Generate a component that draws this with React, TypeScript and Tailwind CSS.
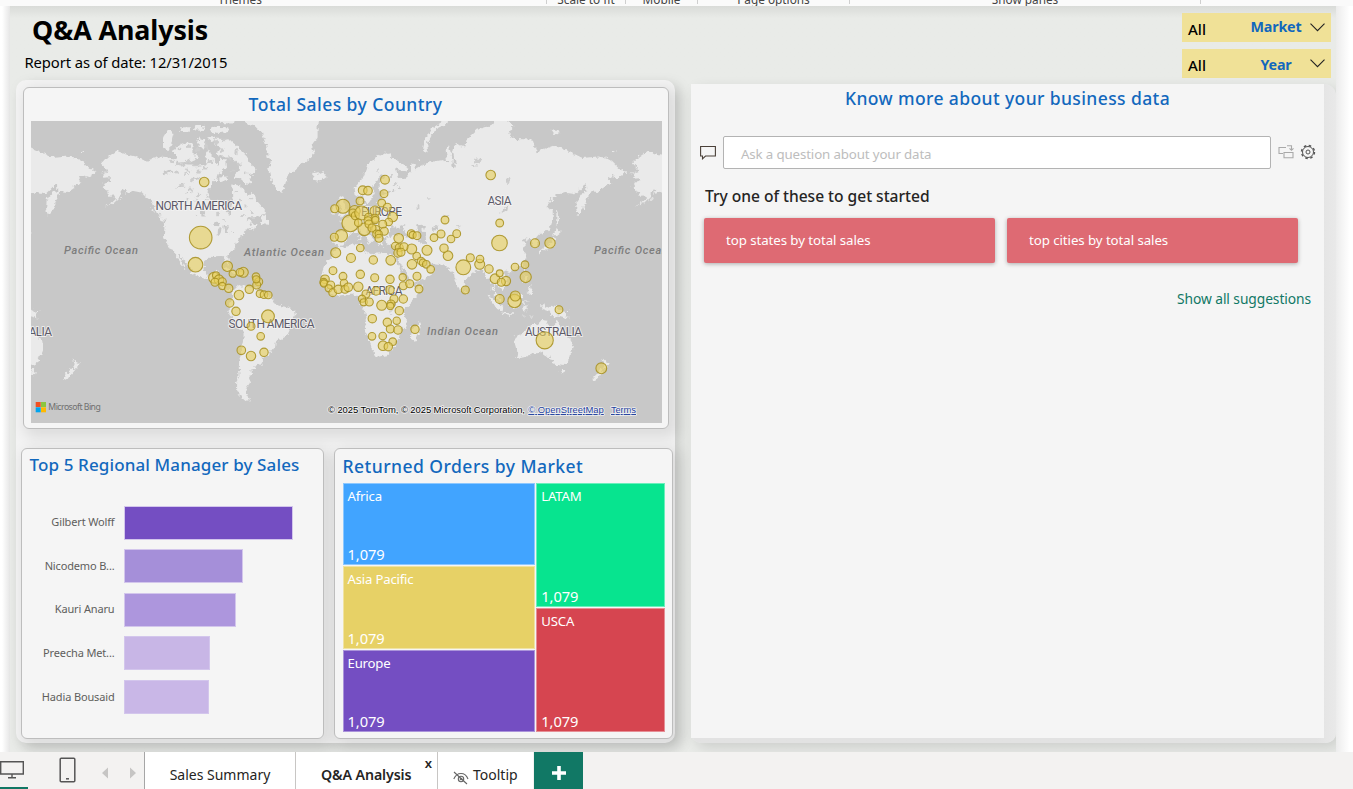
import React from "react";

/* ---------- map data ---------- */

const LAND: string[] = [
  // North and Central America
  "-168,65.6 -164,66.4 -166,64.5 -161,64.6 -161,63.5 -164.5,63 -166,61.6 -164,60.3 -162,60 -162,58.7 -158,58.8 -157,57.5 -160,56 -164.5,54.7 -162,55 -158,56.2 -154,58.3 -153.5,59.5 -151.5,61 -150,61 -151.5,59.3 -148,60 -145,60.3 -140,59.8 -137,58.4 -134,57.5 -131,55 -130,53.5 -128,51.5 -127,50.5 -124,49.3 -122.8,49 -122.5,47.5 -124.6,48.3 -124,46 -124.3,43 -124.2,40.5 -122.5,37.8 -121.8,36.5 -120.6,34.6 -118.4,34 -117.2,32.7 -116,30.5 -114.8,28 -114,27 -112.2,25 -110,23 -109.5,23.3 -111,25.5 -112.5,28 -114.7,31 -113,31 -111,28 -109,26 -107,24 -105.5,21.5 -105.5,20 -104,19 -101,17.5 -97,16 -94.5,16.2 -92,14.5 -88,13 -87.5,12.5 -85.8,11 -85.5,10 -83.5,8.5 -82,8.2 -80,7.4 -79.5,9 -78,8.2 -77.2,8.6 -79.5,9.6 -82,9 -83.5,10.8 -83.3,14 -83.2,15 -86,15.8 -88.5,15.8 -88.2,18 -87,21.4 -90,21.3 -90.5,20 -92,18.6 -94.5,18.2 -96,19.3 -97.5,22 -97.3,25 -97,28 -94.5,29.4 -91,29.3 -89,29.2 -89,30.3 -86,30.4 -84,30 -82.8,28.8 -82.5,27 -81.2,25.2 -80.2,25.5 -80.2,27.5 -81.4,30.5 -79,33 -76,35 -76,37 -74,39.5 -73.5,40.8 -70.3,41.6 -70.8,43 -69,44 -67,44.8 -64.5,45.5 -66,43.7 -63,44.8 -60.5,46.2 -64,46.2 -65,48 -66.5,49 -69,48.3 -66.5,50.2 -60,50.2 -56,51.8 -55.8,53.5 -58,54.8 -61.5,57 -63,59 -65,60 -68,58.5 -70,61 -74,62.2 -78,62.4 -77.5,60 -77,57.5 -76.6,56 -79.5,54.5 -79,52 -80,51.2 -82,53 -82.3,55.2 -86,55.8 -89,57 -92.5,57 -94.7,59 -94.5,61 -91,63 -88,64.2 -87,65.5 -85,66.5 -81.5,67.5 -82,69.3 -85.5,69.5 -88,68 -91,69.5 -94,71.8 -96,70 -96,68 -101,67.8 -108,67.8 -115,68 -115,69.3 -121,69.8 -127,70 -133,69.4 -137,69 -144,70 -150,70.5 -156.5,71.3 -162,70 -166.5,68.3 -163,67 -162,66.3",
  // Arctic islands
  "-117,69 -113,68.6 -106,68.8 -101,69.6 -105,71 -105,73 -109,73 -113,72.6 -119,71.5 -116,70.3",
  "-125,72 -122,71.2 -119,73 -117,75 -122,75.3 -125,74",
  "-90,73.8 -85,73.7 -80,73.6 -76,72.7 -71,71 -68,70 -66,68.5 -62,66.8 -63.5,65 -67,66 -66,64 -65,62.5 -69,62.8 -73,64.4 -78,64.5 -74,66 -73,68 -79,70 -85,70 -89,70.7 -86,72 -90,72.5",
  "-87,64 -84,63.2 -80.5,63.8 -84,65.5",
  "-102,73 -97,71.5 -96,73.5 -100,74",
  "-95,73.8 -91,73 -90,74.2",
  "-93,75 -86,74.8 -80,75 -81,75.8 -92,75.9",
  "-114,75 -107,75 -106,75.8 -113,75.8",
  "-104,75.3 -98,75.2 -97,76.2 -103,76.2",
  "-86,76.5 -78,76.4 -77,78 -88,78",
  // Newfoundland, Vancouver Island, Haida Gwaii, Kodiak
  "-59,47.7 -55.5,46.9 -53,46.8 -53,48.5 -55.7,49.8 -55.7,51.5 -57.5,50.5",
  "-128.3,50.7 -125,50 -123.4,48.5 -125.8,49",
  "-133,54 -131.7,54 -131.2,52.3",
  "-154.5,57.3 -152.3,58.1 -152.8,57.2",
  // Caribbean
  "-84.8,22 -82,23 -78,22.5 -74.3,20.2 -77.5,19.9 -79,21.3",
  "-74.3,19.8 -71,19.9 -68.5,18.6 -71.5,17.8 -74.3,18.4",
  "-78.2,18.4 -76.3,18.2 -77.5,17.9",
  "-67.2,18.4 -65.7,18.3 -66.5,18",
  // South America
  "-77.3,8.5 -76,9.4 -74.8,11 -72,12.2 -71.5,10.8 -70,12 -68,10.8 -64,10.3 -62,10.6 -60,8.6 -57,6.2 -54,5.9 -51.5,4.4 -50,1.8 -50,0 -48,-0.8 -44.5,-2.2 -41,-2.9 -38,-4 -35.3,-5.4 -34.8,-8 -37,-11 -39,-13.5 -39,-17.5 -41,-21.8 -43,-23 -46,-24 -48.5,-26 -48.8,-28.5 -51,-31 -53.5,-34 -56.5,-34.9 -58.3,-34 -57,-36.5 -58.5,-38.5 -62,-39 -62.5,-41 -65,-41 -64.5,-43 -67,-45.5 -65.9,-47.5 -69,-50.5 -68.5,-52.3 -66,-54.8 -69,-55.3 -73,-53 -75.3,-50.5 -75.3,-47 -73,-44 -73.5,-40 -73.3,-37 -71.5,-33 -71.4,-28 -70.3,-23 -70.3,-18.3 -74,-16 -76.5,-13.5 -79,-8 -81.3,-5.8 -80.2,-3.3 -80.8,-1 -78.8,1.6 -77.3,4 -77.7,7",
  // Greenland
  "-73,78.5 -68,76.2 -62,76 -58,75 -55,72.5 -54,70 -51,69 -53.5,67 -52,64.5 -49.5,62 -47,60.7 -44,60 -42,62.5 -40.5,65 -36,66.5 -31,68.2 -25,69.8 -22,70.5 -24,72.5 -20,74 -20,76.5 -18,78.5",
  // Iceland
  "-24,65.6 -22,66.4 -20,65.7 -16,66.4 -13.7,65 -18.5,63.4 -22.5,63.9 -22,64.7",
  // British Isles
  "-5.5,50.1 -3,50.7 1.2,51.2 1.6,52.7 0,53.5 -1.6,55.5 -2,57.6 -3.5,58.6 -5.8,57.5 -4.8,55 -3,53.6 -4.6,53 -5,51.8",
  "-10,51.7 -6.3,52.2 -5.7,54.5 -8,55.3 -10,54",
  // Africa
  "-6,35.8 -2,35.2 3,36.9 10,37.3 11,35 10.2,34 15,32.4 19,30.4 20.5,32.5 23,32.6 29,31 32.3,31.2 34,29.5 32.6,29.9 34,26.5 35.7,23.8 37.2,20 38.5,18 40,15.2 43.2,12 44.5,10.5 51,11.9 50,8 47,4 43,0 40.5,-2.7 39,-6 40.6,-11 40.5,-15 36,-18.8 35.3,-23.5 32.8,-26 31,-29.8 27.5,-33.3 22,-34.2 18.6,-34.3 18.2,-31.7 15.3,-27 14.4,-22.5 11.8,-17.8 13.6,-12.5 13,-8.8 12,-5 9,-1 9.7,4 6,4.3 4,6.4 0,5.7 -4,5.2 -7.7,4.4 -11,6.8 -13.3,9 -15,11 -17.3,14.7 -16.3,18 -17,21 -15.5,24.5 -13,27.8 -10,29.6 -9.6,32",
  "44.5,-16.2 47.5,-15 49.5,-12.2 50.4,-15.7 48.5,-21 47,-25 44.5,-25.4 43.4,-22.5",
  // Eurasia
  "-9.3,43 -9.3,38.8 -8.9,37 -6.2,36.5 -5.3,36.1 -2,36.8 0,38.7 0,40 3.2,42 3.5,43.3 7,43.3 9,44.4 11,42.3 15.5,38 16.8,38.9 18.4,40 15.5,41.8 12.4,44.4 13.6,45.6 16,43.5 19.5,41.8 19.5,40 21.3,37 23,36.5 24,38 22.8,40.4 26,40.7 29,41.1 28,43.5 30.5,46 33,46.1 33.6,44.5 36.5,45.3 35,46.3 39,47.2 37.5,45 41.5,42 41,41 35,42 31,41.2 27,40.4 26.3,38.5 28,36.8 32,36.1 36,36.8 35.8,34 34.3,31.3 34.8,29.5 35,28 39,21.5 42.5,16.5 43.4,12.7 45,12.8 52,15.7 57.7,19 59.8,22.5 56.5,24.5 56.3,26.2 54,24.1 51.5,24.3 51.5,26 50,26.5 48,29.9 50.5,29.8 52.5,27.5 56.5,27 57.3,25.7 61.5,25.1 66.5,25.2 68.5,23.3 70,20.8 72.7,21 73,17 75,12 77.3,8.2 80,13 80.3,15.7 85,19.5 88,21.7 91.5,22.5 94.3,18 94.5,16 97.5,16.5 98.5,12 98.3,8.5 101,5 103.4,1.5 104.2,1.5 103.3,5 100.5,7.3 99.3,9.5 100,13.4 102.5,12 105,8.7 109.2,12 108.7,15.5 106,19 108,21.5 110.5,20.5 114,22.3 118.5,24.7 121.8,29 121,32 119.3,35 122.4,37 118,38.5 121.7,40.8 121.3,38.9 124.5,40 126.5,37.2 126.5,34.4 129.3,35.4 129.4,37.2 127.5,39.7 130.6,42.3 135,43.3 138.5,46.5 140.5,50 140.4,53 137.3,53.8 135.5,54.8 142,59 149,59.6 155,59.2 160,61.6 163,62.5 163.2,60.2 159.8,59.8 156,57 155.6,54 156.7,51 160,53.2 162.2,56.2 163.3,58.2 166,60.2 170,60 177,62.3 179.5,62.6 177.3,64.6 180,65 184,64.5 190,66.1 185,67.2 180,69 176,69.8 170,70 160,69.7 152,71 142,72.5 133,71.5 129,71 126,73.6 114,73.7 110,74.5 113,76 104,77.6 98,76.2 88,75.4 81,73.6 80.5,72 77,72.3 74,73 72,71 74,68 73,66.5 71.5,67.5 71.8,69.5 69,72.8 67,71.5 68,68.6 64,69.2 60,68.9 54,68.4 46,66.8 46,68.2 43.5,68.3 43.5,66.2 40,64.6 36.5,64 34.5,64.8 32.5,67.1 40,66.2 41,67.2 33,69.4 27,71 20,70 14.5,68 10.5,64.2 5.2,61.5 5.8,58.7 8,58.2 10.6,59.4 12.6,56 14.2,55.5 16.5,57.2 18.8,60 17.2,61.5 21.2,64.5 24,65.8 25.2,65 21.5,62.5 21.5,60.8 25,60.1 29.5,60 28,59.4 23.5,59 24.3,57.3 21.5,57.3 21,55.2 18.5,54.7 14,54 11,54 10.5,57.5 8.2,56.8 8.7,53.9 5,53.3 2.5,51.1 -1.5,49.5 -4.6,48.5 -1.5,46.6 -1.5,43.4",
  "11,53.9 12.5,55.9 10.8,55.5",
  "51.5,71.5 53,70.8 55,71.2 54.5,73 57,74.3 61,75.6 68.5,76.5 66,76.9 57,75.5 53,73.5",
  "142,54.2 143.2,52 143.3,49.5 144.5,48.8 142.8,46.2 142,48 142.2,51",
  "140,41.5 141,43.5 142,45.4 145.2,43.4 143,42",
  "141,41.4 142,39.5 140.8,36 139.5,35 136,33.6 132.5,34 130.8,31.2 129.8,33 131,34.3 135,35.5 137,37 139.5,38.5",
  "120.2,23 121.5,25.2 121,22.2",
  "108.7,19.3 110.8,20 109.6,18.3",
  "8.3,39 9.7,39.2 9.5,43 8.5,42",
  "12.5,38 15.5,38.2 15,36.8",
  "23.6,35.4 26.2,35.2 24.5,34.9",
  "32.4,34.9 34.4,35.6 33.5,34.6",
  "79.8,8.5 81.7,7.5 80.5,6",
  "50,69.3 48.3,69.3 49,68.7",
  "139,75.4 145,75 141,74.6",
  "180,71.4 182,71.2 180,70.9",
  // Maritime south-east Asia
  "95.4,5.6 98,4 103.5,-1 106,-3 105.7,-5.8 102,-4 99,0",
  "105.3,-6.4 108.5,-6.8 112.5,-6.9 114.4,-8 110,-8 106.4,-7.4",
  "109,1.5 111.5,2.5 115.5,5.5 117,7 119,5.2 117.5,1 116,-3.5 112,-3.4 110,-1.5",
  "119,-3.2 120,0.8 125,1.5 120.5,0.4 121,-1 123.5,-1 121.5,-2 123,-5 121,-4 120.3,-5.6 119.4,-5.4",
  "120,16 120.6,18.5 122.2,18.4 121.6,15.5 124,13 121,13.7",
  "122,7 125.5,9.8 126.5,7.5 125.4,5.7 124,7.2",
  "123,9.2 125.4,12.4 125,10.2",
  "131,-0.8 134,-0.8 135,-3.3 138,-1.7 141,-2.6 145,-4.2 147.8,-6.5 150.7,-10.5 147,-9.5 143.5,-8.5 141,-9.1 138,-8.3 138,-5.7 133,-4 132,-2.8",
  "148.5,-5.7 152,-4.3 150,-6.3",
  "118,-8.4 122.7,-8.4 119,-8.8",
  "124,-9.4 127,-8.5 124,-10.2",
  // Oceania
  "113.7,-22.5 114,-26.5 115.7,-31.8 115,-34.3 118,-35 123.5,-33.9 129,-31.6 134,-32.7 136,-34.8 137.8,-32.7 137,-35.5 139.5,-36 141,-38.2 145,-38.5 147,-38.8 150,-37.4 151.5,-33 153.4,-29 153,-25 149.5,-22 146,-19 145.3,-15 143.7,-14.3 142.5,-10.8 141.5,-13.5 141,-17 139.3,-17.5 135.7,-15 136.8,-12.2 132.5,-11.4 130,-13.5 129,-15 126.5,-14 123.5,-17 122,-18.2 118.5,-20.4",
  "144.7,-40.8 148.2,-40.9 147.5,-43.5 145.8,-43.2",
  "172.8,-34.5 175.5,-36.6 178.4,-37.8 176.8,-40 175,-41.5 173.8,-39.3 174.7,-37.5",
  "172.7,-40.6 174.2,-41.7 171.2,-44.3 169,-46.6 166.6,-45.8 170,-43",
];

const WATER: string[] = [
  "47,46.5 51,47 53,45.3 51,44.5 53.5,41 53.7,37.2 50,37.3 49,39.5 47.6,43",
  "58.3,45.5 61,46.5 61,44.3 58.5,43.8",
  "-92,46.7 -88.5,48.7 -84.8,46.6 -88,46.7",
  "-87.8,42 -86.3,42 -85,45.8 -87.5,45.4",
  "-84,46 -80,45.4 -81.7,43.3 -83.4,43.6",
  "-83,41.7 -79,42.9 -81,42.4",
  "-79.5,43.4 -76.3,44 -76.5,43.4",
  "-98.8,50.5 -96.6,50.5 -97.7,53.8 -99.3,53",
  "-117,61 -109.5,62.8 -114,62.4",
  "-124,65.2 -118,66.2 -120,67 -124.5,66.3",
  "-111,59 -106,59.5 -110,59.7",
  "-103,56.6 -101.5,58.2 -102.2,56.4",
  "-104,64 -99,64.4 -102,64.9",
  "-107,66 -108.5,67.4 -109.5,66.6",
  "31,60 33,60.6 31.4,61.6",
  "34.5,61.2 36,61.4 35,62.6",
  "103.8,51.6 109.8,55.6 108.8,53.3",
  "32,-2.4 34,-1 33.5,0.3 31.8,-0.2",
  "74,46 79,46.5 74.5,45.2",
  "29.2,-4 30.2,-8 30.8,-8.5 29.8,-4",
  "34,-10 35,-14 34.4,-13",
  "77,42.2 78.2,42.6 76.5,42.6",
];

// Small lakes and inlets of the Canadian Shield: x, y, rx, ry
const LAKES: number[][] = [
  [172,161,3,1.2],[180,165,4,1.4],[188,161,2.5,1.6],[196,166,3.5,1.3],[176,172,2,1.4],[186,174,3,1],[192,180,2,1.5],[199,172,2,1.8],[205,168,3,1.5],[210,162,3,2],
  [183,186,2.5,1],[191,190,2,1.4],[198,195,2.2,1.2],[187,200,1.5,1.4],[206,200,2,1],[212,207,1.8,1.3],[218,214,2,1.2],[224,220,2,1],[203,210,1.4,1.6],[197,215,1.2,1],
  [236,192,1.5,1],[240,200,2,1.2],[246,206,1.6,1.4],[234,208,1.8,1],[243,215,2,1],[230,200,1.2,1.2],[250,199,1.4,1],[252,212,2,1],[228,227,2,0.9],
  [197,150,2.5,2.5],[206,146,2,3],[215,142,3,2],[222,150,2.5,2],[230,158,2.5,1.5],[236,152,1.6,3],[224,140,3,1.2],[240,165,2,1.6],[233,171,2.5,1.2],[246,174,1.6,1.6],[188,146,2,2],[179,149,2.5,1.2],
  [300,228,0,0],[478,161,4,2.5],[474,166,3,1],[508,181,1.5,3],[418,207,1.5,2],[428,198,2,0.8],[446,216,2.5,1],[391,176,1.6,1],[395,184,1.4,0.9],[378,170,0.8,2],
];

const BUBBLES: number[][] = [
  [204.2,182,4.8],[200.7,237.6,11.3],[195.5,264.7,7.3],[227.3,266.3,5.2],[232.7,273.7,3.6],[243.3,272.3,5],[240,272.3,3.8],[214,277.7,5.4],[216,275.3,3.5],[219,279.7,4.8],[215,282.3,4],[222.3,281.7,4],[222.3,286,3.6],[228.7,288.3,4.2],[239,295,4.8],[249.3,289.3,4.2],[256,276.7,3.8],[258.7,281.7,4],[256.7,285,4],[256.3,279.3,3.6],[260,293.7,3.8],[264,294.7,3.8],[268.3,295,3.8],[229.7,303,4.2],[236,311.3,4.2],[268,316.3,6.4],[251,326.3,4],[260.7,336.3,3.8],[241.3,350.3,4.3],[251,356,4.7],[264,352.3,4.2],
  [335.7,252.7,5],[333,270.7,3.9],[343,276.3,3.9],[325,279.3,4.3],[323.7,282.3,3.9],[324,283.5,3.6],[330.7,285,4],[328.7,288.3,3.6],[332.7,292.7,3.9],[338.3,289.3,4.2],[344,283,3.7],[345,289.3,4],[348.3,287.3,4.3],[351,258,4.5],[360.3,274.3,4.2],[373.3,260,4.2],[390.7,260.3,4.8],[374.7,277.7,4],[390,279.3,4.2],[402.7,277.3,3.7],[358.3,286.7,4.7],[366,294,4],[362,298.7,3.6],[363.7,302.3,3.6],[369.3,302,4],[376,291,4.2],[390,289.7,4.2],[403.3,285.7,4],[409.7,283.7,4],[417,276.3,4],[419,289,3.9],[394,299,4],[391,304,4],[390.3,306,3.6],[381.7,305.3,5],[403.3,299,4.2],[399.3,310.7,4.2],[372.3,318.7,4.2],[387.3,322.3,4.2],[396.7,320.7,3.7],[390.3,329,4],[398,330,4.2],[415,329.3,4.2],[372,336.3,3.8],[382.7,336,3.8],[392.7,341.7,3.8],[383,345.7,4.8],[388.3,346.7,4.2],
  [412,264.3,4.8],[416.7,256,3.8],[421,261,3.8],[423,262.7,3.7],[426.3,264.3,3.8],[430.7,269.3,3.8],[427,250.3,5],[411.7,249,5],[448,255.7,4.8],[444,248.2,4.2],[463.3,267.3,7.4],[470.3,257.7,4],[479.7,264.3,5],[480,259,3.8],[489,269,4.2],[465.3,290,4],[495,278.7,4.8],[499.7,273.3,3.4],[506,281,4.6],[501.3,282.3,4],[515,267,3.8],[525,264.7,3.8],[525.7,277,5.6],[499.7,299,4.5],[514.5,301,6.7],[515.3,296,5],[559,309.7,3.9],[544.7,340.3,8.6],[601.3,368.3,5.4],
  [490.7,175,4.8],[499.7,223,3.9],[499.5,243,7.8],[535,243.3,4.5],[550,243,5.2],[445,220,3.9],[441,234,4],[434,237.7,3.8],[451,239,3.8],[456.7,233.7,3.9],[411.3,233.7,4],[412.7,235,3.6],[417,235.7,3.9],[398.7,238.3,4.8],[395.3,246,3.8],[399.3,247.7,4],[404,246.7,4],[398,253,4.2],[401,252.3,4],[360.3,248,3.8],[385,179.7,4.4],[362.7,190.3,4.4],[368,190.7,4.3],[384,193.7,3.9],[360,201,3.9],[381.7,203,3.9],[387.3,207.3,4],[392.7,217,4.8],[343,206.3,7],[334.7,208.7,4],[350.3,223.3,8.4],[364.3,229.3,6.3],[341.3,235.7,6.2],[334.3,237.3,4],[354.7,211,5.5],[353,213,4],[355.3,215.7,4],[361.7,213,7],[375,211,5],[368.7,217.3,4],[375,218.3,4],[368,220.7,4],[369,224,4],[358.3,222.7,3.8],[388.7,222,3.8],[382.7,224.3,4],[375.7,229.3,4],[372,228,4],[384.3,231.3,4],[376.7,234,4],[378.7,234,3.6],[379,238.3,4],[375.3,220,3.6],
];

const DEG = 530 / 360;

const project = (points: string, dx: number) =>
  points
    .split(" ")
    .map((p) => {
      const [lon, lat] = p.split(",").map(Number);
      const m = Math.log(Math.tan(Math.PI / 4 + (lat * Math.PI) / 360));
      return `${(347 + dx + lon * DEG).toFixed(1)},${(303 - (360 / (2 * Math.PI)) * DEG * m).toFixed(1)}`;
    })
    .join(" ");

function SalesMap() {
  return (
    <svg viewBox="31 121 631 302" width="631" height="302" className="block bg-[#c8c8c8]">
      <defs>
        <filter id="coast" x="-5%" y="-5%" width="110%" height="110%">
          <feTurbulence type="fractalNoise" baseFrequency="0.25" numOctaves="3" seed="4" result="n" />
          <feDisplacementMap in="SourceGraphic" in2="n" scale="6" xChannelSelector="R" yChannelSelector="G" />
        </filter>
      </defs>
      <g filter="url(#coast)">
        {[-530, 0, 530].map((dx) => (
          <g key={dx}>
            {LAND.map((l, i) => (
              <polygon key={i} points={project(l, dx)} fill="#eaeaea" />
            ))}
            {WATER.map((l, i) => (
              <polygon key={i} points={project(l, dx)} fill="#c9c9c9" />
            ))}
          </g>
        ))}
        {LAKES.map(([x, y, rx, ry], i) => (
          <ellipse key={i} cx={x} cy={y} rx={rx} ry={ry} fill="#cdcdcd" />
        ))}
      </g>
      <g fontFamily="Roboto, sans-serif" fontSize="12" fill="#5d5a68" stroke="#f4f4f4" strokeWidth="2" strokeOpacity="0.8" strokeLinejoin="round" paintOrder="stroke">
        <text x="155.5" y="209.5" textLength="86.5">NORTH AMERICA</text>
        <text x="228.5" y="327.5" textLength="86">SOUTH AMERICA</text>
        <text x="361" y="215.5" textLength="41">EUROPE</text>
        <text x="487.5" y="205.2" textLength="24">ASIA</text>
        <text x="365.5" y="294.5" textLength="37">AFRICA</text>
        <text x="525" y="336" textLength="57">AUSTRALIA</text>
        <text x="-5" y="336" textLength="57">AUSTRALIA</text>
      </g>
      <g fontFamily="Roboto, sans-serif" fontSize="11" fontStyle="italic" fontWeight="500" fill="#7d7d7d">
        <text x="64" y="254" textLength="74">Pacific Ocean</text>
        <text x="594" y="254" textLength="74">Pacific Ocean</text>
        <text x="244" y="256" textLength="80">Atlantic Ocean</text>
        <text x="427" y="335" textLength="71">Indian Ocean</text>
      </g>
      <g fill="#e6cf5c" fillOpacity="0.62" stroke="#a68e1d" strokeOpacity="0.85" strokeWidth="1.1">
        {BUBBLES.map(([x, y, r], i) => (
          <circle key={i} cx={x} cy={y} r={r} />
        ))}
      </g>
      <rect x="35.7" y="402" width="5" height="5" fill="#f25022" />
      <rect x="41" y="402" width="5" height="5" fill="#8cc63f" />
      <rect x="35.7" y="407.3" width="5" height="5" fill="#00a4ef" />
      <rect x="41" y="407.3" width="5" height="5" fill="#ffb900" />
      <text x="48.3" y="410.3" fontFamily="Noto Sans, sans-serif" fontSize="8.7" fill="#6f6f6f" textLength="52.5">Microsoft Bing</text>
      <g fontFamily="Liberation Sans, sans-serif" fontSize="9.5" stroke="#f0f0f0" strokeWidth="1.6" strokeLinejoin="round" paintOrder="stroke">
        <text x="328" y="413" fill="#000" textLength="197">© 2025 TomTom, © 2025 Microsoft Corporation,</text>
        <text x="528.3" y="413" fill="#1e3f9e" textLength="75.5" textDecoration="underline">© OpenStreetMap</text>
        <text x="611" y="413" fill="#1e3f9e" textLength="25" textDecoration="underline">Terms</text>
      </g>
    </svg>
  );
}

/* ---------- cards ---------- */

const CARD = "rounded-[6px] border border-[#bdbdbd] bg-[#f5f5f5] shadow-[5px_5px_14px_4px_rgba(0,0,0,0.09)]";
const HEADING = "whitespace-nowrap font-medium text-[#1268bd]";

const MANAGERS = [
  { name: "Gilbert Wolff", width: 169, fill: "bg-[#744ec2]" },
  { name: "Nicodemo B...", width: 119, fill: "bg-[#a58fd9]" },
  { name: "Kauri Anaru", width: 112, fill: "bg-[#ad96dd]" },
  { name: "Preecha Met...", width: 86, fill: "bg-[#c8b6e6]" },
  { name: "Hadia Bousaid", width: 85, fill: "bg-[#c9b7e7]" },
];

function Tile({ name, className }: { name: string; className: string }) {
  return (
    <div className={`flex min-h-0 flex-1 flex-col justify-between border border-white/40 pl-1 text-white ${className}`}>
      <span className="mt-[3px] text-[13.2px] leading-[18px] tracking-[-0.2px]">{name}</span>
      <span className="mb-px text-[14.7px] leading-[18px] tracking-[-0.1px]">1,079</span>
    </div>
  );
}

function Slicer({ label, value, className }: { label: string; value: string; className: string }) {
  return (
    <div className="flex h-[29px] w-[149px] items-center bg-[#f0e197] pl-1.5 pr-1.5">
      <span className="mt-1 w-[34px] text-[15px] font-medium text-black">{value}</span>
      <span className={`flex-1 text-center text-[14.3px] font-bold tracking-[-0.2px] text-[#1268bd] ${className}`}>{label}</span>
      <svg width="15" height="9" viewBox="0 0 15 9" fill="none" stroke="#222" strokeWidth="1.1">
        <path d="M0.5 0.7 7.5 7.7 14.5 0.7" />
      </svg>
    </div>
  );
}

function Suggestion({ text }: { text: string }) {
  return (
    <div className="flex h-[45px] w-[291px] items-center rounded-[2px] bg-[#de6a73] pt-px pl-[22px] text-[13.3px] tracking-[-0.08px] text-white shadow-[0_1px_4px_rgba(0,0,0,0.3)]">
      {text}
    </div>
  );
}

function QnaPanel() {
  return (
    <section className="mt-1 ml-[15px] h-[659px] w-[645px] rounded-tr-[12px] rounded-br-[10px] rounded-bl-[10px] bg-gradient-to-r from-[#e2e2e2] from-97% to-[#e9e9e9] pr-3 pb-[5px] shadow-[5px_5px_14px_rgba(0,0,0,0.12)]">
      <div className="flex h-full flex-col bg-[#f5f5f5]">
        <h2 className={`${HEADING} mt-[2px] text-center text-[17.5px] leading-[25px] tracking-[0.39px]`}>Know more about your business data</h2>
        <div className="mt-[25px] flex items-center pl-[9px]">
          <svg width="16" height="15" viewBox="0 0 16 15" fill="none" stroke="#4a4038" strokeWidth="1.1">
            <path d="M0.6 1.5H15.4V11H5.5L2.5 13.8V11H0.6Z" />
          </svg>
          <div className="ml-[7px] flex h-[33px] w-[548px] items-center rounded-[2px] border border-[#b3b3b3] bg-white pt-[4px] pl-[17px] text-[13.3px] tracking-[-0.14px] text-[#bdbdbd]">
            Ask a question about your data
          </div>
          <svg className="mb-0.5 ml-[7px]" width="16" height="14" viewBox="0 0 16 14" fill="none" stroke="#a9a9a9" strokeWidth="1.1">
            <path d="M5 8.5H1V2.5H8M6 7.500H15V12.800H6ZM9 0.800H13.500V5M11.500 3.300 13.500 5.300 15.500 3.300" />
          </svg>
          <svg className="mb-0.5 ml-[6px]" width="16" height="16" viewBox="0 0 16 16" fill="none" stroke="#555" strokeWidth="1">
            <circle cx="8" cy="8" r="5.500" />
            <circle cx="8" cy="8" r="2" />
            <circle cx="8" cy="8" r="6.500" strokeWidth="1.400" strokeDasharray="2.550 2.550" />
          </svg>
        </div>
        <p className="mt-[15px] ml-3.5 text-[15.6px] leading-6 font-medium tracking-[-0.03px] text-[#252423]">Try one of these to get started</p>
        <div className="mt-[10px] ml-[13px] flex gap-3">
          <Suggestion text="top states by total sales" />
          <Suggestion text="top cities by total sales" />
        </div>
        <p className="mt-[26px] mr-[13px] text-right text-[13.8px] leading-5 tracking-[-0.08px] text-[#117865]">Show all suggestions</p>
      </div>
    </section>
  );
}

/* ---------- page ---------- */

const RIBBON = [
  { text: "Themes", className: "w-[547px] border-r pr-[66px]" },
  { text: "Scale to fit", className: "w-[79px] border-r" },
  { text: "Mobile", className: "w-[72px] border-r" },
  { text: "Page options", className: "w-[152px] border-r" },
  { text: "Show panes", className: "w-[351px] border-r" },
];

export default function App() {
  return (
    <div className="flex h-[789px] w-[1353px] flex-col overflow-hidden bg-white font-['Noto_Sans',sans-serif]">
      <div className="z-10 flex h-[6px] shrink-0 items-end overflow-hidden bg-[#fafafa] text-center text-[11.8px] leading-[14px] text-[#444]">
        {RIBBON.map((r) => (
          <div key={r.text} className={`flex h-1 shrink-0 -translate-y-0.5 items-end justify-center border-[#cfcfcf] whitespace-nowrap ${r.className}`}>
            <span className="translate-y-[2px]">{r.text}</span>
          </div>
        ))}
      </div>

      <div className="flex h-[746px] shrink-0 overflow-hidden">
        <div className="w-2.5 shrink-0 bg-gradient-to-r from-white from-20% to-[#e6e6e6]" />
        <main className="w-[1326px] shrink-0 bg-gradient-to-b from-[#d9dbd8] to-[#e9ebe8] to-[12px]">
          <header className="flex h-[74px] justify-between pr-[5px]">
            <div>
              <h1 className="mt-[6px] ml-[22px] text-[26.8px] leading-9 font-bold tracking-[-0.07px] text-black">Q&amp;A Analysis</h1>
              <p className="mt-1 ml-[14.5px] text-[14.8px] leading-5 tracking-[-0.1px] text-black">Report as of date: 12/31/2015</p>
            </div>
            <div className="flex flex-col gap-[7px] pt-[7px]">
              <Slicer value="All" label="Market" className="pb-0.5 pl-5" />
              <Slicer value="All" label="Year" className="pt-0.5 pl-5" />
            </div>
          </header>

          <div className="flex">
            <section className="ml-1.5 h-[663px] w-[659px] rounded-[10px] bg-[#f3f3f3] pt-[7px] shadow-[5px_5px_14px_rgba(0,0,0,0.13)]">
              <div className={`${CARD} ml-[6.500px] h-[342px] w-[646px] px-[7.500px]`}>
                <h2 className={`${HEADING} mt-1 mb-[4px] text-center text-[17.5px] leading-[25px] tracking-[0.440px]`}>Total Sales by Country</h2>
                <SalesMap />
              </div>
              <div className="mt-[19px] ml-[5px] flex gap-2.5">
                <div className={`${CARD} h-[291px] w-[303px]`}>
                  <h2 className={`${HEADING} mt-[3px] ml-[7.500px] text-[17px] leading-[25px] tracking-[0.120px]`}>Top 5 Regional Manager by Sales</h2>
                  <div className="mt-[28.500px] flex flex-col gap-[9.6px]">
                    {MANAGERS.map((m) => (
                      <div key={m.name} className="flex h-[34px] items-center">
                        <span className="w-[92.500px] text-right text-[11px] tracking-[-0.150px] whitespace-nowrap text-[#605e5c]">{m.name}</span>
                        <div className={`ml-[9px] h-full border border-[#d3c6ec] ${m.fill}`} style={{ width: m.width }} />
                      </div>
                    ))}
                  </div>
                </div>
                <div className={`${CARD} h-[291px] w-[339px] px-[7.500px]`}>
                  <h2 className={`${HEADING} mt-[5px] text-[17.5px] leading-[25px] tracking-[0.470px]`}>Returned Orders by Market</h2>
                  <div className="mt-[3.500px] flex h-[249.500px] gap-px">
                    <div className="flex w-[194px] flex-col gap-px">
                      <Tile name="Africa" className="bg-[#41a4ff]" />
                      <Tile name="Asia Pacific" className="bg-[#e7d166]" />
                      <Tile name="Europe" className="bg-[#744ec2]" />
                    </div>
                    <div className="flex w-[129px] flex-col gap-px">
                      <Tile name="LATAM" className="bg-[#07e48f]" />
                      <Tile name="USCA" className="bg-[#d64550]" />
                    </div>
                  </div>
                </div>
              </div>
            </section>
            <div className="ml-px">
              <QnaPanel />
            </div>
          </div>
        </main>
        <div className="w-[17px] shrink-0 bg-gradient-to-l from-white from-20% to-[#ececec]" />
      </div>

      <footer className="flex h-[37px] shrink-0 bg-[#f3f2f1] text-[14px] text-[#252423]">
        <div className="flex h-full w-7 flex-col justify-between border-b-2 border-[#117865]">
          <svg className="mt-[9px]" width="24" height="18" viewBox="0 0 24 18" fill="none" stroke="#555" strokeWidth="1.4">
            <path d="M0.7 0.8H23.3V13H0.7ZM12 13V16.5M8 16.8H16" />
          </svg>
        </div>
        <svg className="mt-[5px] ml-[31px]" width="18" height="27" viewBox="0 0 18 27" fill="none" stroke="#555" strokeWidth="1.5">
          <rect x="1.2" y="1.2" width="14.6" height="23.6" rx="1" />
          <path d="M7 21.8H10" />
        </svg>
        <svg className="mt-[15px] ml-[25px]" width="34" height="12" viewBox="0 0 34 12" fill="#c6c5c4">
          <path d="M6 0.5V11.5L0 6ZM28 0.5V11.5L34 6Z" />
        </svg>
        <div className="ml-2 flex w-[151px] items-center justify-center border-l border-[#a6a6a6] bg-white pt-[7px] whitespace-nowrap">Sales Summary</div>
        <div className="flex w-[142px] justify-between border-l border-[#c8c6c4] bg-white pr-[5px] pl-[25px] font-semibold whitespace-nowrap">
          <span className="pt-[12px] text-[14.200px] tracking-[-0.100px]">Q&amp;A Analysis</span>
          <span className="pt-0.5 text-[13px] leading-[18px]">x</span>
        </div>
        <div className="flex w-[96px] border-l border-[#c8c6c4] bg-white pl-[15px]">
          <svg className="mt-[19px]" width="16" height="14" viewBox="0 0 16 14" fill="none" stroke="#666" strokeWidth="1.1">
            <path d="M1 1 14 13M0.8 8C2.5 4 5 2.5 8 2.5S13.500 4 15 8" />
            <circle cx="8" cy="8" r="2.7" />
            <circle cx="8" cy="8" r="0.8" />
          </svg>
          <span className="ml-1 pt-[12px]">Tooltip</span>
        </div>
        <div className="ml-px flex w-[49px] items-center justify-center bg-[#117865] pt-1">
          <svg width="14" height="14" viewBox="0 0 14 14" stroke="#fff" strokeWidth="3.6">
            <path d="M7 0V14M0 7H14" />
          </svg>
        </div>
      </footer>
    </div>
  );
}
